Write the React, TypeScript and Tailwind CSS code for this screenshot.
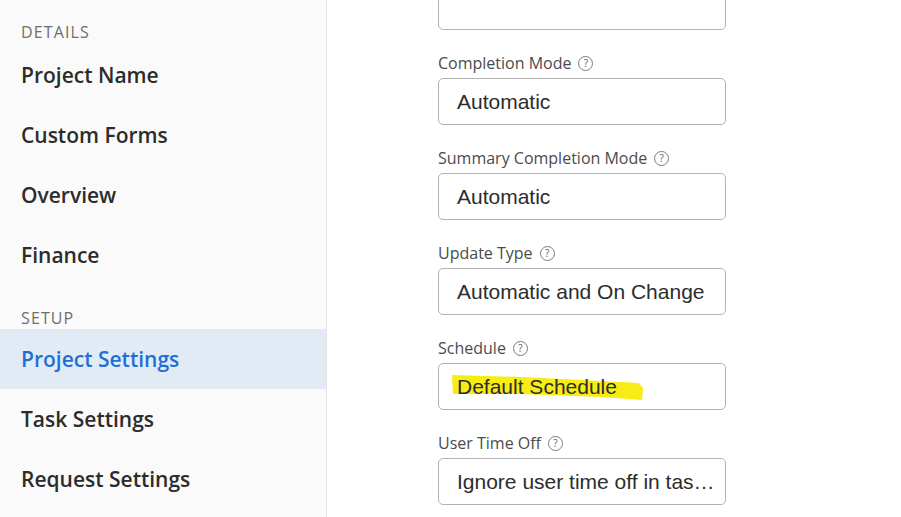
import React from "react";

const sans = { fontFamily: '"Open Sans", "Noto Sans", sans-serif' };
const arial = { fontFamily: '"Liberation Sans", Arial, sans-serif' };

function Help() {
  return (
    <span className="ml-[7px] inline-flex h-[15px] w-[15px] items-center justify-center rounded-full border border-[#7a7a7a] text-[10px] leading-none text-[#5e5e5e]">
      ?
    </span>
  );
}

function Field({
  label,
  value,
  highlight,
}: {
  label: string;
  value: string;
  highlight?: boolean;
}) {
  return (
    <div className="mb-[23px]">
      <div className="flex h-[20px] items-center text-[16px] leading-[20px] text-[#4b4b4b]" style={sans}>
        {label}
        <Help />
      </div>
      <div className="relative mt-[5px] flex h-[47px] w-[288px] items-center rounded-[5px] border border-[#b3b3b3] bg-white pl-[18px] pr-[10px]">
        {highlight && (
          <svg className="absolute left-0 top-0" width="288" height="47" viewBox="0 0 288 47">
            <polygon
              points="13,11 82,13 162,17 200,19 204,24 203,36 162,33 82,30 14,30"
              fill="#f7ec13"
            />
          </svg>
        )}
        <span className="relative whitespace-nowrap text-[21px] leading-[24px] text-[#2c2c2c]" style={arial}>
          {value}
        </span>
      </div>
    </div>
  );
}

function NavHeader({ children, low }: { children: React.ReactNode; low?: boolean }) {
  return (
    <div
      className={
        "flex h-[44px] items-end pl-[21px] text-[16px] leading-[20px] tracking-[0.07em] text-[#6e6e6e] " +
        (low ? "pb-[1px]" : "pb-[3px]")
      }
      style={sans}
    >
      {children}
    </div>
  );
}

function NavItem({ children, active }: { children: React.ReactNode; active?: boolean }) {
  return (
    <div
      className={
        "flex h-[60px] items-center pl-[21px] pt-[2px] text-[21px] font-semibold " +
        (active ? "bg-[#e1ebf6] text-[#1f6fd6]" : "text-[#2c2c2c]")
      }
      style={sans}
    >
      {children}
    </div>
  );
}

export default function App() {
  return (
    <div className="flex h-[517px] w-[901px] overflow-hidden bg-white">
      <aside className="h-full w-[327px] shrink-0 border-r border-[#e3e3e3] bg-[#fafafa] pt-[1px]">
        <NavHeader>DETAILS</NavHeader>
        <NavItem>Project Name</NavItem>
        <NavItem>Custom Forms</NavItem>
        <NavItem>Overview</NavItem>
        <NavItem>Finance</NavItem>
        <NavHeader low>SETUP</NavHeader>
        <NavItem active>Project Settings</NavItem>
        <NavItem>Task Settings</NavItem>
        <NavItem>Request Settings</NavItem>
      </aside>
      <main className="flex-1 pl-[111px]">
        <div className="-mt-[17px] mb-[23px] h-[47px] w-[288px] rounded-[5px] border border-[#b3b3b3] bg-white" />
        <Field label="Completion Mode" value="Automatic" />
        <Field label="Summary Completion Mode" value="Automatic" />
        <Field label="Update Type" value="Automatic and On Change" />
        <Field label="Schedule" value="Default Schedule" highlight />
        <Field label="User Time Off" value="Ignore user time off in tas…" />
      </main>
    </div>
  );
}
